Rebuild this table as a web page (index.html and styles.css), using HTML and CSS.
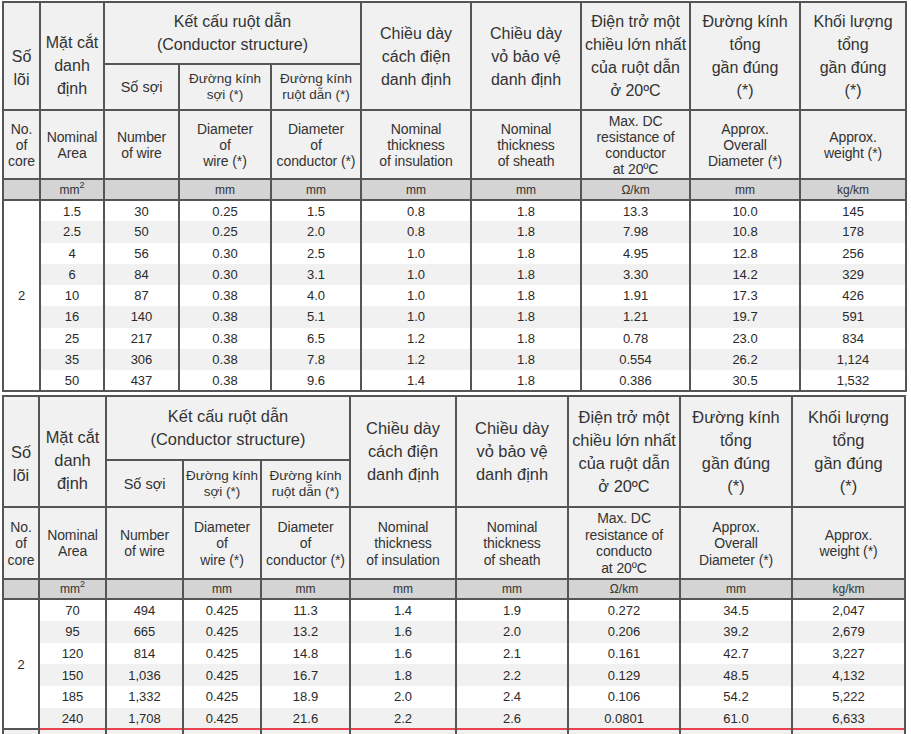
FILE: index.html
```html
<!DOCTYPE html>
<html lang="vi">
<head>
<meta charset="utf-8">
<title>Cable specification</title>
<link rel="stylesheet" href="styles.css">
</head>
<body>
<div class="page">
<table class="spec t1">
  <colgroup>
    <col class="c1"><col class="c2"><col class="c3"><col class="c4"><col class="c5">
    <col class="c6"><col class="c7"><col class="c8"><col class="c9"><col class="c10">
  </colgroup>
  <thead>
    <tr class="r-vi">
      <th rowspan="2" class="vi p-core">Số<br>lõi</th>
      <th rowspan="2" class="vi p-area">Mặt cắt<br>danh<br>định</th>
      <th colspan="3" class="vi group">Kết cấu ruột dẫn<br>(Conductor structure)</th>
      <th rowspan="2" class="vi">Chiều dày<br>cách điện<br>danh định</th>
      <th rowspan="2" class="vi">Chiều dày<br>vỏ bảo vệ<br>danh định</th>
      <th rowspan="2" class="vi">Điện trở một<br>chiều lớn nhất<br>của ruột dẫn<br>ở 20ºC</th>
      <th rowspan="2" class="vi">Đường kính<br>tổng<br>gần đúng<br>(*)</th>
      <th rowspan="2" class="vi">Khối lượng<br>tổng<br>gần đúng<br>(*)</th>
    </tr>
    <tr class="r-sub">
      <th class="sub big">Số sợi</th>
      <th class="sub">Đường kính<br>sợi (*)</th>
      <th class="sub">Đường kính<br>ruột dẫn (*)</th>
    </tr>
    <tr class="r-en">
      <th class="en">No.<br>of<br>core</th>
      <th class="en">Nominal<br>Area</th>
      <th class="en">Number<br>of wire</th>
      <th class="en">Diameter<br>of<br>wire (*)</th>
      <th class="en">Diameter<br>of<br>conductor (*)</th>
      <th class="en">Nominal<br>thickness<br>of insulation</th>
      <th class="en">Nominal<br>thickness<br>of sheath</th>
      <th class="en">Max. DC<br>resistance of<br>conductor<br>at 20ºC</th>
      <th class="en">Approx.<br>Overall<br>Diameter (*)</th>
      <th class="en">Approx.<br>weight (*)</th>
    </tr>
    <tr class="r-unit">
      <th></th><th>mm<sup>2</sup></th><th></th><th>mm</th><th>mm</th>
      <th>mm</th><th>mm</th><th>Ω/km</th><th>mm</th><th>kg/km</th>
    </tr>
  </thead>
  <tbody>
    <tr><td rowspan="9" class="core">2</td><td>1.5</td><td>30</td><td>0.25</td><td>1.5</td><td>0.8</td><td>1.8</td><td>13.3</td><td>10.0</td><td>145</td></tr>
    <tr><td>2.5</td><td>50</td><td>0.25</td><td>2.0</td><td>0.8</td><td>1.8</td><td>7.98</td><td>10.8</td><td>178</td></tr>
    <tr><td>4</td><td>56</td><td>0.30</td><td>2.5</td><td>1.0</td><td>1.8</td><td>4.95</td><td>12.8</td><td>256</td></tr>
    <tr><td>6</td><td>84</td><td>0.30</td><td>3.1</td><td>1.0</td><td>1.8</td><td>3.30</td><td>14.2</td><td>329</td></tr>
    <tr><td>10</td><td>87</td><td>0.38</td><td>4.0</td><td>1.0</td><td>1.8</td><td>1.91</td><td>17.3</td><td>426</td></tr>
    <tr><td>16</td><td>140</td><td>0.38</td><td>5.1</td><td>1.0</td><td>1.8</td><td>1.21</td><td>19.7</td><td>591</td></tr>
    <tr><td>25</td><td>217</td><td>0.38</td><td>6.5</td><td>1.2</td><td>1.8</td><td>0.78</td><td>23.0</td><td>834</td></tr>
    <tr><td>35</td><td>306</td><td>0.38</td><td>7.8</td><td>1.2</td><td>1.8</td><td>0.554</td><td>26.2</td><td>1,124</td></tr>
    <tr><td>50</td><td>437</td><td>0.38</td><td>9.6</td><td>1.4</td><td>1.8</td><td>0.386</td><td>30.5</td><td>1,532</td></tr>
  </tbody>
</table>

<table class="spec t2">
  <colgroup>
    <col class="c1"><col class="c2"><col class="c3"><col class="c4"><col class="c5">
    <col class="c6"><col class="c7"><col class="c8"><col class="c9"><col class="c10">
  </colgroup>
  <thead>
    <tr class="r-vi">
      <th rowspan="2" class="vi p-core">Số<br>lõi</th>
      <th rowspan="2" class="vi p-area">Mặt cắt<br>danh<br>định</th>
      <th colspan="3" class="vi group">Kết cấu ruột dẫn<br>(Conductor structure)</th>
      <th rowspan="2" class="vi">Chiều dày<br>cách điện<br>danh định</th>
      <th rowspan="2" class="vi">Chiều dày<br>vỏ bảo vệ<br>danh định</th>
      <th rowspan="2" class="vi">Điện trở một<br>chiều lớn nhất<br>của ruột dẫn<br>ở 20ºC</th>
      <th rowspan="2" class="vi">Đường kính<br>tổng<br>gần đúng<br>(*)</th>
      <th rowspan="2" class="vi">Khối lượng<br>tổng<br>gần đúng<br>(*)</th>
    </tr>
    <tr class="r-sub">
      <th class="sub big">Số sợi</th>
      <th class="sub">Đường kính<br>sợi (*)</th>
      <th class="sub">Đường kính<br>ruột dẫn (*)</th>
    </tr>
    <tr class="r-en">
      <th class="en">No.<br>of<br>core</th>
      <th class="en">Nominal<br>Area</th>
      <th class="en">Number<br>of wire</th>
      <th class="en">Diameter<br>of<br>wire (*)</th>
      <th class="en">Diameter<br>of<br>conductor (*)</th>
      <th class="en">Nominal<br>thickness<br>of insulation</th>
      <th class="en">Nominal<br>thickness<br>of sheath</th>
      <th class="en">Max. DC<br>resistance of<br>conducto<br>at 20ºC</th>
      <th class="en">Approx.<br>Overall<br>Diameter (*)</th>
      <th class="en">Approx.<br>weight (*)</th>
    </tr>
    <tr class="r-unit">
      <th></th><th>mm<sup>2</sup></th><th></th><th>mm</th><th>mm</th>
      <th>mm</th><th>mm</th><th>Ω/km</th><th>mm</th><th>kg/km</th>
    </tr>
  </thead>
  <tbody>
    <tr><td rowspan="6" class="core">2</td><td>70</td><td>494</td><td>0.425</td><td>11.3</td><td>1.4</td><td>1.9</td><td>0.272</td><td>34.5</td><td>2,047</td></tr>
    <tr><td>95</td><td>665</td><td>0.425</td><td>13.2</td><td>1.6</td><td>2.0</td><td>0.206</td><td>39.2</td><td>2,679</td></tr>
    <tr><td>120</td><td>814</td><td>0.425</td><td>14.8</td><td>1.6</td><td>2.1</td><td>0.161</td><td>42.7</td><td>3,227</td></tr>
    <tr><td>150</td><td>1,036</td><td>0.425</td><td>16.7</td><td>1.8</td><td>2.2</td><td>0.129</td><td>48.5</td><td>4,132</td></tr>
    <tr><td>185</td><td>1,332</td><td>0.425</td><td>18.9</td><td>2.0</td><td>2.4</td><td>0.106</td><td>54.2</td><td>5,222</td></tr>
    <tr><td>240</td><td>1,708</td><td>0.425</td><td>21.6</td><td>2.2</td><td>2.6</td><td>0.0801</td><td>61.0</td><td>6,633</td></tr>
    <tr class="next"><td></td><td></td><td></td><td></td><td></td><td></td><td></td><td></td><td></td><td></td></tr>
  </tbody>
</table>
</div>
</body>
</html>
```

FILE: styles.css
```css
html {
  overflow: hidden;
}
body {
  margin: 0;
  background: #ffffff;
  font-family: "Liberation Sans", Arial, sans-serif;
  color: #333333;
}
.page {
  display: flex;
  flex-direction: column;
  gap: 3px;
  padding: 1px 0 0 2px;
}
.spec {
  border-collapse: collapse;
  table-layout: fixed;
  border: 2px solid #555555;
}
.spec th,
.spec td {
  border: 2px solid #555555;
  padding: 0;
  text-align: center;
  vertical-align: middle;
  font-weight: normal;
}
.spec thead th {
  background: #f1f1f1;
}
.t1 { width: 905px; }
.t2 { width: 904px; }

.t1 .c1 { width: 37px; }
.t1 .c2 { width: 64px; }
.t1 .c3 { width: 75px; }
.t1 .c4 { width: 92px; }
.t1 .c5 { width: 90px; }
.t1 .c6 { width: 110px; }
.t1 .c7 { width: 110px; }
.t1 .c8 { width: 109px; }
.t1 .c9 { width: 110px; }
.t1 .c10 { width: 106px; }

.t2 .c1 { width: 36px; }
.t2 .c2 { width: 67px; }
.t2 .c3 { width: 77px; }
.t2 .c4 { width: 78px; }
.t2 .c5 { width: 89px; }
.t2 .c6 { width: 106px; }
.t2 .c7 { width: 112px; }
.t2 .c8 { width: 112px; }
.t2 .c9 { width: 112px; }
.t2 .c10 { width: 113px; }

.vi {
  font-size: 16px;
  line-height: 23px;
}
.t2 .vi { font-size: 16.4px; }
.p-core { padding-top: 24px !important; }
.p-area { padding-top: 18px !important; }
.sub {
  font-size: 13.5px;
  line-height: 16px;
}
.sub.big { font-size: 14.5px; }
.en {
  font-size: 14px;
  line-height: 16px;
  letter-spacing: -0.1px;
}
.t2 .en { line-height: 16.5px; }

.t1 .r-vi { height: 62px; }
.t1 .r-sub { height: 46px; }
.t1 .r-en { height: 69px; }
.t2 .r-vi { height: 64px; }
.t2 .r-sub { height: 47px; }
.t2 .r-en { height: 72px; }

.r-unit { height: 21px; }
.t2 .r-unit { height: 20px; }
.spec .r-unit th {
  background: #d4d4d4;
  font-size: 12px;
  line-height: 14px;
}
.r-unit sup {
  font-size: 9px;
  line-height: 0;
  vertical-align: 6px;
}

.spec tbody td {
  font-size: 13px;
  line-height: 15px;
  color: #2a2a2a;
  border-top: none;
  border-bottom: none;
}
.t1 tbody tr { height: 21.25px; }
.t2 tbody tr { height: 21.7px; }
.spec tbody tr:nth-child(even) td {
  background: #f1f1f1;
}
.spec tbody td.core {
  background: #ffffff;
  border-bottom: 2px solid #555555;
}
.t1 tbody tr:last-child td { border-bottom: 2px solid #555555; }
.spec tbody tr.next td {
  background: #f1f1f1;
  border-top: 2px solid #e8424f;
  height: 20px;
}
```
